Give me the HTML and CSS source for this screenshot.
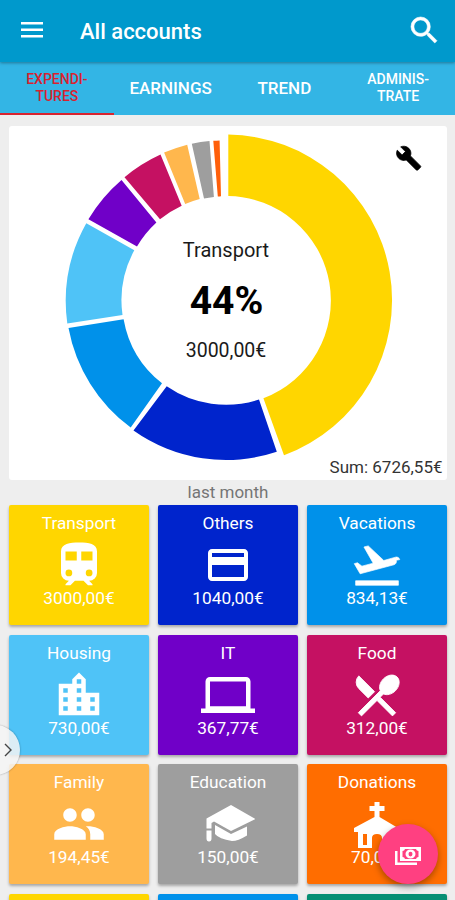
FILE: index.html
```html
<!DOCTYPE html>
<html lang="en">
<head>
    <meta charset="UTF-8">
    <meta name="viewport" content="width=device-width, initial-scale=1.0">
    <title>All accounts</title>
    <link rel="stylesheet" href="styles.css">
</head>
<body>
    <header class="toolbar">
        <svg class="menu-icon" viewBox="0 0 22 16"><path d="M0 0h22v2.6H0zM0 6.5h22v2.6H0zM0 13h22v2.6H0z"/></svg>
        <h1>All accounts</h1>
        <svg class="search-icon" viewBox="3 3 17.5 17.5"><path d="M15.5 14h-.79l-.28-.27A6.47 6.47 0 0 0 16 9.5 6.5 6.5 0 1 0 9.5 16c1.61 0 3.09-.59 4.23-1.57l.27.28v.79l5 4.99L20.49 19l-4.99-5zm-6 0C7.01 14 5 11.99 5 9.5S7.01 5 9.5 5 14 7.01 14 9.5 11.99 14 9.5 14z"/></svg>
    </header>

    <nav class="tabs">
        <a class="tab small active">EXPENDI-<br>TURES</a>
        <a class="tab">EARNINGS</a>
        <a class="tab">TREND</a>
        <a class="tab small">ADMINIS-<br>TRATE</a>
    </nav>

    <main>
        <section class="chart">
            <svg viewBox="9 126 438 354">
                <path fill="#ffd600" d="M228.3 134.6A165.5 165.5 0 0 1 284 455.3L263.4 398.2A104.5 104.5 0 0 0 228.3 196Z"/>
                <path fill="#0024cc" d="M276.8 451.8A160 160 0 0 1 133.5 430.5L166.7 386.3A104.5 104.5 0 0 0 259 399.5Z"/>
                <path fill="#0091ea" d="M130.7 427.5A160 160 0 0 1 68.5 328L123.6 319.2A104.5 104.5 0 0 0 162 383.3Z"/>
                <path fill="#4fc3f7" d="M67.3 323.5A160 160 0 0 1 86.3 223.2L134.3 250.3A104.5 104.5 0 0 0 122.5 315Z"/>
                <path fill="#7000c8" d="M88.4 219.3A160 160 0 0 1 121.5 180L156.4 222.5A104.5 104.5 0 0 0 137 246.5Z"/>
                <path fill="#c51162" d="M124.5 177.2A160 160 0 0 1 160.5 154.5L181.7 205.7A104.5 104.5 0 0 0 160 219.3Z"/>
                <path fill="#ffb74d" d="M164.1 152.6A160 160 0 0 1 187.2 144.7L199.7 199A104.5 104.5 0 0 0 185.2 204Z"/>
                <path fill="#9e9e9e" d="M191.8 143.7A160 160 0 0 1 209.5 141L213.9 197A104.5 104.5 0 0 0 204 198.5Z"/>
                <path fill="#ff5f0a" d="M213.3 140.8A160 160 0 0 1 219.6 140.4L221 196.2A104.5 104.5 0 0 0 217.8 196.5Z"/>
                <text class="slice-name" x="226" y="257">Transport</text>
                <text class="slice-percent" x="226.5" y="314">44%</text>
                <text class="slice-sum" x="226" y="357">3000,00€</text>
                <text class="total" x="442.5" y="473">Sum: 6726,55€</text>
                <g class="wrench" transform="translate(395.5 145) scale(1.1)"><path d="M22.7 19l-9.1-9.1c.9-2.3.4-5-1.5-6.9-2-2-5-2.4-7.4-1.3L9 6 6 9 1.6 4.7C.4 7.1.9 10.1 2.9 12.1c1.9 1.9 4.6 2.4 6.9 1.5l9.1 9.1c.4.4 1 .4 1.4 0l2.3-2.3c.5-.4.5-1.1.1-1.4z"/></g>
            </svg>
        </section>

        <p class="period">last month</p>

        <section class="categories">
            <div class="tile transport">
                <h2>Transport</h2>
                <svg viewBox="0 0 24 24"><path fill-rule="evenodd" d="M12 2c-4 0-8 .5-8 4v9.5A3.5 3.5 0 0 0 7.5 19L6 20.5v.5h2.2l2-2H14l2 2h2v-.5L16.5 19a3.5 3.5 0 0 0 3.5-3.5V6c0-3.5-3.6-4-8-4zM7.5 17a1.5 1.5 0 1 1 0-3 1.5 1.5 0 0 1 0 3zM11 10H6V6h5zm2 0V6h5v4zm3.5 7a1.5 1.5 0 1 1 0-3 1.5 1.5 0 0 1 0 3z"/></svg>
                <p>3000,00€</p>
            </div>
            <div class="tile others">
                <h2>Others</h2>
                <svg viewBox="-1.5 -1.5 27 27"><path fill-rule="evenodd" d="M20 4H4c-1.1 0-2 .9-2 2v12c0 1.1.9 2 2 2h16c1.1 0 2-.9 2-2V6c0-1.1-.9-2-2-2zm0 14H4v-6h16v6zm0-10H4V6h16v2z"/></svg>
                <p>1040,00€</p>
            </div>
            <div class="tile vacations">
                <h2>Vacations</h2>
                <svg viewBox="0 0 24 24"><path d="M2.5 19h19v2h-19zM22.1 9.6c-.2-.8-1-1.3-1.8-1.1L15 10 8.1 3.5l-1.9.5 4.1 7.2-5 1.3-2-1.5-1.4.4 2.6 4.5 15-4c.9-.2 1.3-1.2 1.1-2z" stroke="white" stroke-width=".3"/></svg>
                <p>834,13€</p>
            </div>
            <div class="tile housing">
                <h2>Housing</h2>
                <svg viewBox="0 0 24 24"><path fill-rule="evenodd" d="M15 11V5l-3-3-3 3v2H3v14h18V11h-6zm-8 8H5v-2h2v2zm0-4H5v-2h2v2zm0-4H5V9h2v2zm6 8h-2v-2h2v2zm0-4h-2v-2h2v2zm0-4h-2V9h2v2zm0-4h-2V5h2v2zm6 12h-2v-2h2v2zm0-4h-2v-2h2v2z"/></svg>
                <p>730,00€</p>
            </div>
            <div class="tile it">
                <h2>IT</h2>
                <svg viewBox="0 0 24 24"><path fill-rule="evenodd" d="M4 4h16c1.1 0 2 .9 2 2v12h2v2H0v-2h2V6c0-1.1.9-2 2-2zm0 2v11h16V6z"/></svg>
                <p>367,77€</p>
            </div>
            <div class="tile food">
                <h2>Food</h2>
                <svg viewBox="0 0 24 24"><path d="M8.1 13.34l2.83-2.83L3.91 3.5a4 4 0 0 0 0 5.66l4.19 4.18zm6.78-1.81c1.53.71 3.68.21 5.27-1.38 1.91-1.91 2.28-4.65.81-6.12-1.46-1.46-4.2-1.1-6.12.81-1.59 1.59-2.09 3.74-1.38 5.27L3.7 19.87l1.41 1.41L12 14.41l6.88 6.88 1.41-1.41L13.41 13l1.47-1.47z" stroke="white" stroke-width=".4"/></svg>
                <p>312,00€</p>
            </div>
            <div class="tile family">
                <h2>Family</h2>
                <svg viewBox="0 0 24 24"><path d="M16 11c1.66 0 2.99-1.34 2.99-3S17.66 5 16 5s-3 1.34-3 3 1.34 3 3 3zm-8 0c1.66 0 2.99-1.34 2.99-3S9.66 5 8 5 5 6.34 5 8s1.34 3 3 3zm0 2c-2.33 0-7 1.17-7 3.5V19h14v-2.5c0-2.33-4.67-3.5-7-3.5zm8 0c-.29 0-.62.02-.97.05 1.16.84 1.97 1.97 1.97 3.45V19h6v-2.5c0-2.33-4.67-3.5-7-3.5z"/></svg>
                <p>194,45€</p>
            </div>
            <div class="tile education">
                <h2>Education</h2>
                <svg viewBox="0 0 54 54"><path d="M30 8l24.500 14L30 34 13 24.500 10.500 26v5.500H5.500V21.500zM5.500 33.500h5v8q0 3-2.500 3t-2.500-3zM14 28l16 9 16-7.500v9Q37 44 31 44 18 42 14 37z"/></svg>
                <p>150,00€</p>
            </div>
            <div class="tile donations">
                <h2>Donations</h2>
                <svg viewBox="0 0 54 54"><path fill-rule="evenodd" d="M24.500 5h5v4h5v5h-5v6L48 31v4h-4v16H32V41q0-4-5-4t-5 4v10H8V35H4v-4l20.500-11v-6h-5V9h5zM13 37v11h4V37zM36 37v11h4V37z"/></svg>
                <p>70,00€</p>
            </div>
            <div class="tile transport"></div>
            <div class="tile vacations"></div>
            <div class="tile green"></div>
        </section>
    </main>

    <button class="drawer-handle" aria-label="Open">
        <svg viewBox="0 0 8 14"><path d="M1 1l6 6-6 6"/></svg>
    </button>
    <button class="fab" aria-label="Add">
        <svg viewBox="0 0 26 20"><path fill-rule="evenodd" d="M5 1h21v14H5zM7.500 5v6q2 0 2.500 2h11q.5-2 2.500-2V5q-2 0-2.500-2H10q-.5 2-2.500 2z"/><path fill-rule="evenodd" d="M15.500 3.500a5 4.500 0 0 1 0 9 5 4.500 0 0 1 0-9zm0 2.200a2 2.400 0 0 0 0 4.800 2 2.400 0 0 0 0-4.800z"/><path d="M0 5h2.500v11.500H22V19H0z"/></svg>
    </button>
</body>
</html>
```
FILE: styles.css
```css
body {
    font-family: Roboto, "Liberation Sans", sans-serif;
    margin: 0;
    height: 900px;
    background-color: #eee;
    overflow: hidden;
    position: relative;
}

h1, h2, p {
    margin: 0;
}

/* top bar */
.toolbar {
    display: flex;
    align-items: center;
    box-sizing: border-box;
    height: 62px;
    padding: 0 18px 0 21px;
    background-color: #0099cc;
    color: white;
    fill: white;
    position: relative;
    box-shadow: 0 1px 3px rgba(0, 0, 0, 0.35);
}

.toolbar h1 {
    flex: 1;
    margin-left: 37px;
    font-size: 22px;
    font-weight: 500;
}

.menu-icon {
    width: 22px;
    height: 16px;
    margin-top: -2px;
}

.search-icon {
    width: 26px;
    height: 26px;
    margin-top: -2px;
    stroke: white;
    stroke-width: 0.4;
    overflow: visible;
}

.tabs {
    display: grid;
    grid-template-columns: repeat(4, 1fr);
    height: 53px;
    background-color: #33b5e5;
    color: white;
}

.tab {
    display: flex;
    align-items: center;
    justify-content: center;
    box-sizing: border-box;
    border-bottom: 2px solid transparent;
    padding-top: 1px;
    font-size: 17px;
    font-weight: 500;
    text-align: center;
}

.tab.small {
    font-size: 14px;
    line-height: 17px;
}

.tab.active {
    color: #d8232f;
    border-bottom-color: #d8232f;
}

main {
    box-sizing: border-box;
    height: 785px;
    padding: 11px 8px 0 9px;
    overflow: hidden;
}

.chart {
    height: 354px;
    background-color: white;
    border-radius: 3px;
}

.chart svg {
    display: block;
    width: 438px;
    height: 354px;
}

.slice-name,
.slice-percent,
.slice-sum {
    text-anchor: middle;
    font-size: 20px;
    fill: #1a1a1a;
}

.slice-percent {
    font-size: 39px;
    font-weight: 700;
    fill: black;
}

.slice-sum {
    font-size: 19.500px;
}

.total {
    text-anchor: end;
    font-size: 17px;
    fill: #333;
}

.wrench {
    stroke: black;
    stroke-width: 0.7;
}

.period {
    height: 25px;
    line-height: 25px;
    font-size: 17px;
    text-align: center;
    color: #757575;
}

/* category tiles */
.categories {
    display: grid;
    grid-template-columns: repeat(3, 1fr);
    grid-auto-rows: 120px;
    gap: 9.6px 9px;
}

.tile {
    display: flex;
    flex-direction: column;
    align-items: center;
    box-sizing: border-box;
    padding-top: 8px;
    border-radius: 2px;
    color: white;
    fill: white;
    box-shadow: 0 2px 3px rgba(0, 0, 0, 0.3);
}

.tile h2,
.tile p {
    font-size: 17.300px;
    font-weight: 400;
    line-height: 20px;
}

.tile svg {
    width: 54px;
    height: 54px;
    margin: 5px 0 -4px;
}

.transport { background-color: #ffd600; }
.others { background-color: #0024cc; }
.vacations { background-color: #0091ea; }
.housing { background-color: #4fc3f7; }
.it { background-color: #7000c8; }
.food { background-color: #c51162; }
.family { background-color: #ffb74d; }
.education { background-color: #9e9e9e; }
.donations { background-color: #ff6d00; }
.green { background-color: #058f74; }

/* floating buttons */
.drawer-handle,
.fab {
    display: flex;
    align-items: center;
    position: absolute;
    padding: 0;
    border: none;
    border-radius: 50%;
}

.drawer-handle {
    left: -30px;
    top: 725px;
    width: 50px;
    height: 50px;
    justify-content: flex-end;
    padding-right: 8px;
    background-color: rgba(245, 245, 245, 0.85);
    box-shadow: 0 0 2px rgba(0, 0, 0, 0.4);
}

.drawer-handle svg {
    width: 8px;
    height: 14px;
    fill: none;
    stroke: #444;
    stroke-width: 1.4;
}

.fab {
    left: 378px;
    top: 824px;
    width: 60px;
    height: 60px;
    justify-content: center;
    background-color: #ff4081;
    box-shadow: 0 3px 7px rgba(0, 0, 0, 0.35);
}

.fab svg {
    width: 26px;
    height: 20px;
    margin: 4px 1px 0 0;
    fill: white;
}
```
